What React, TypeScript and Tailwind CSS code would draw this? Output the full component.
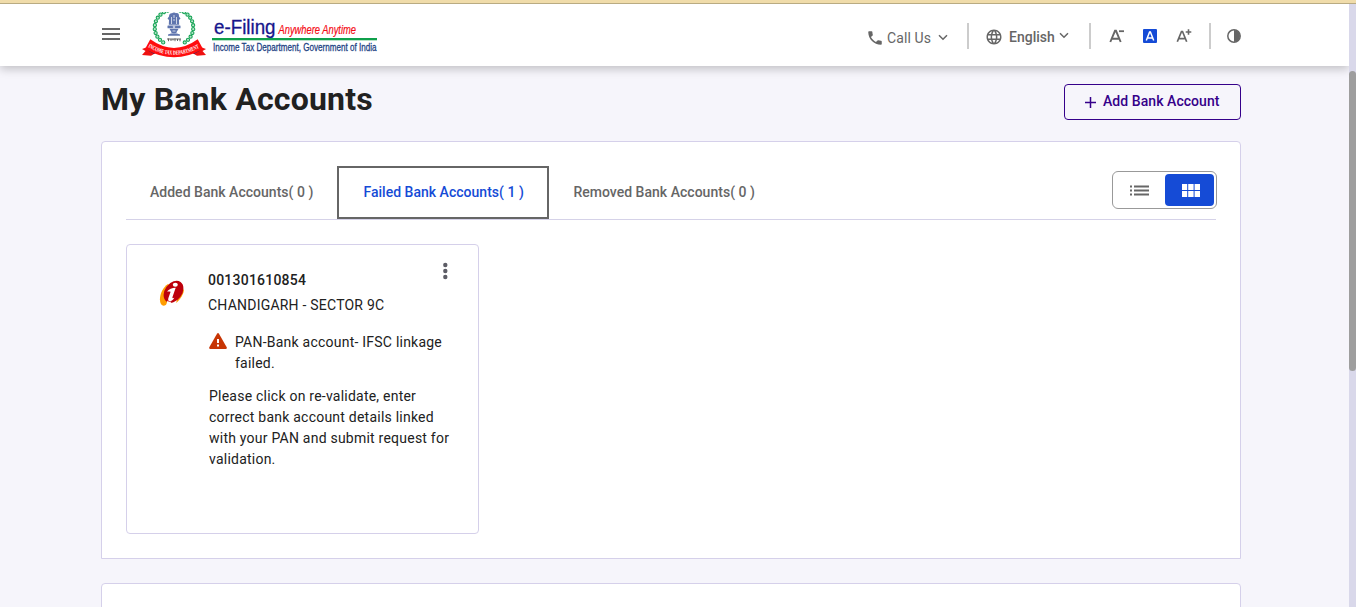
import React from "react";

const GREEN = "#16a455";
const wreath = Array.from({ length: 24 }, (_, i) => {
  const a = ((124 + i * 12.7) * Math.PI) / 180;
  return { x: 33 + 19.3 * Math.cos(a), y: 15.5 + 18 * Math.sin(a) };
});

function Emblem() {
  return (
    <svg width="66" height="46" viewBox="0 0 66 46" className="shrink-0" role="img">
      {wreath.map((p, i) => (
        <circle key={i} cx={p.x} cy={p.y} r="1.6" fill="#b9e3ca" stroke={GREEN} strokeWidth="1.1" />
      ))}
      <g fill="#5f75ae">
        <path d="M28 4.500c0-3 2-3.700 3-3.200 1-1.200 3-1.200 4 0 1.500-.6 3.200.2 3 3.200l1.500 2-1.500 1.500.2 4.800H27.800l.2-4.800L26.500 6.500z" />
        <rect x="26.500" y="13.500" width="13" height="2.800" rx=".5" />
        <path d="M28.500 16.800h9c-.6 2-2.200 2.700-2 4.200h-5c.2-1.500-1.400-2.200-2-4.200z" />
        <path d="M27 22.500q6-2.500 12 0v1.200H27z" />
      </g>
      <g stroke="#fff" strokeWidth=".7" fill="none">
        <path d="M30.500 5v7M35.500 5v7M33 3v3M32 8h2M31.500 19h3" />
        <circle cx="33" cy="14.900" r=".8" />
      </g>
      <path d="M26 27h14M27.500 26.500v2.700M30 27v2M32 27v1.500M34 26.500v2.700M36.500 27v2M39 27v2.300" stroke="#555" strokeWidth=".9" fill="none" />
      <path d="M8 34.500 1 37l3.500 2L1 43l9 .7 5-3zM58 34.500l7 2.500-3.500 2 3.500 4-9 .7-5-3z" fill="#ee1111" />
      <path d="m7 38.500 6 3.500 2-2-5-3zM59 38.500l-6 3.500-2-2 5-3z" fill="#172d75" />
      <path d="M9.300 27.300Q33 44.500 56.700 27.300L62 37Q33 53.500 4 37Z" fill="#ff0d0d" />
      <path id="ribbon" d="M7 35Q33 50.500 60 35" fill="none" />
      <text fill="#fff" fontSize="6" fontWeight="700" fontFamily="Liberation Serif, serif">
        <textPath href="#ribbon" textLength="54" lengthAdjust="spacingAndGlyphs">INCOME TAX DEPARTMENT</textPath>
      </text>
    </svg>
  );
}

function Wordmark() {
  return (
    <svg width="166" height="40" viewBox="0 0 166 40" className="shrink-0 overflow-visible" fontFamily="Liberation Sans, Arial, sans-serif">
      <text x="2" y="17.500" fontSize="20" fill="#16168c" stroke="#16168c" strokeWidth=".3" textLength="61.500" lengthAdjust="spacingAndGlyphs">e-Filing</text>
      <text x="66.500" y="18" fontSize="12.500" fontStyle="italic" fill="#f50a14" stroke="#f50a14" strokeWidth=".2" textLength="77.500" lengthAdjust="spacingAndGlyphs">Anywhere Anytime</text>
      <rect x="0" y="22" width="165" height="2.300" fill="#0fa04b" />
      <text x="1" y="34.500" fontSize="11.500" fill="#1c4283" stroke="#1c4283" strokeWidth=".3" textLength="163.500" lengthAdjust="spacingAndGlyphs">Income Tax Department, Government of India</text>
    </svg>
  );
}

function Chevron({ className = "" }: { className?: string }) {
  return (
    <svg width="10" height="7" viewBox="0 0 10 7" fill="none" stroke="#666" strokeWidth="1.500" className={className}>
      <path d="m1 1.200 4 4 4-4" />
    </svg>
  );
}

function Header() {
  return (
    <header className="relative z-10 flex h-[62px] shrink-0 items-start bg-white pl-[102px] shadow-[0_3px_9px_rgba(0,0,0,0.22)]">
      <button className="mt-6 flex w-[18px] flex-col gap-[3px]" aria-label="Menu">
        <span className="h-0.5 w-full bg-[#666]" />
        <span className="h-0.5 w-full bg-[#666]" />
        <span className="h-0.5 w-full bg-[#666]" />
      </button>
      <a className="ml-[21px] mt-2 flex w-[237px] items-start">
        <Emblem />
        <span className="ml-[5px] mt-[4px] flex"><Wordmark /></span>
      </a>
      <div className="ml-[488px] mt-[19px] flex h-[26px] items-center text-[#666]">
        <div className="flex w-[101px] items-center">
          <svg width="18" height="18" viewBox="0 0 24 24" fill="#666" className="mt-[3px]">
            <path d="M6.620 10.790c1.440 2.830 3.760 5.140 6.590 6.590l2.200-2.200c.27-.27.67-.36 1.020-.24 1.120.37 2.330.57 3.570.57.55 0 1 .45 1 1V20c0 .55-.45 1-1 1-9.390 0-17-7.610-17-17 0-.55.45-1 1-1h3.500c.55 0 1 .45 1 1 0 1.250.2 2.450.57 3.570.11.35.03.74-.25 1.020l-2.200 2.200z" />
          </svg>
          <span className="ml-[3px] mt-[3px] text-[14px] leading-5 tracking-[0.1px]">Call Us</span>
          <Chevron className="ml-auto mr-[19px] mt-[3px]" />
        </div>
        <span className="h-[26px] w-0.5 bg-[#ccc]" />
        <div className="flex w-[120px] items-center">
          <svg width="18" height="18" viewBox="0 0 24 24" fill="#666" className="ml-[16px] mt-px">
            <path d="M11.990 2C6.470 2 2 6.480 2 12s4.470 10 9.990 10C17.520 22 22 17.520 22 12S17.520 2 11.990 2zm6.930 6h-2.950a15.650 15.650 0 0 0-1.380-3.560A8.030 8.030 0 0 1 18.920 8zM12 4.040c.83 1.200 1.480 2.530 1.910 3.960h-3.820c.43-1.430 1.080-2.760 1.910-3.960zM4.260 14C4.100 13.360 4 12.690 4 12s.1-1.360.26-2h3.380c-.08.66-.14 1.320-.14 2s.06 1.340.14 2H4.260zm.82 2h2.950c.32 1.250.78 2.450 1.380 3.560A7.990 7.990 0 0 1 5.080 16zm2.950-8H5.080a7.990 7.990 0 0 1 4.330-3.560A15.650 15.650 0 0 0 8.030 8zM12 19.960c-.83-1.200-1.480-2.530-1.910-3.960h3.820c-.43 1.430-1.080 2.760-1.910 3.960zM14.340 14H9.660c-.09-.66-.16-1.320-.16-2s.07-1.350.16-2h4.680c.09.65.16 1.320.16 2s-.07 1.340-.16 2zm.25 5.560c.6-1.110 1.060-2.310 1.380-3.560h2.950a8.030 8.030 0 0 1-4.330 3.560zM16.360 14c.08-.66.14-1.320.14-2s-.06-1.340-.14-2h3.380c.16.64.26 1.310.26 2s-.1 1.360-.26 2h-3.380z" />
          </svg>
          <span className="ml-[6px] mt-px text-[14px] leading-5 font-medium">English</span>
          <Chevron className="mb-[2px] ml-1" />
        </div>
        <span className="h-[26px] w-0.5 bg-[#ccc]" />
        <svg width="17" height="16" viewBox="0 0 17 16" fill="none" stroke="#666" className="ml-[18px]" role="img">
          <path d="M1.300 14 6 2.800h1L11.700 14M3.200 10.800h6.600" strokeWidth="1.900" />
          <path d="M10 3.200h5" strokeWidth="1.800" />
        </svg>
        <span className="ml-[17px] flex h-[14px] w-[14px] items-center justify-center rounded-[1px] bg-[#154bd6]">
          <svg width="10" height="12" viewBox="0 0 10 12" fill="none" stroke="#fff" strokeWidth="1.500">
            <path d="M1.300 10.500 4.600 2h.8l3.300 8.500M2.700 8h4.600" />
          </svg>
        </span>
        <svg width="17" height="16" viewBox="0 0 17 16" fill="none" stroke="#666" className="ml-[19px]">
          <path d="M1.300 13.700 5.500 3.500h1l4.200 10.200M3 10.700h6" strokeWidth="1.700" />
          <path d="M9.700 4h5.600M12.500 1.200v5.600" strokeWidth="1.600" />
        </svg>
        <span className="ml-4 h-[26px] w-0.5 bg-[#ccc]" />
        <svg width="14" height="14" viewBox="0 0 14 14" className="ml-4">
          <circle cx="7" cy="7" r="6.200" fill="#fff" stroke="#666" strokeWidth="1.500" />
          <path d="M7 1a6 6 0 0 1 0 12z" fill="#666" />
        </svg>
      </div>
    </header>
  );
}

function Tabs() {
  return (
    <div className="flex h-[54px] items-start border-b border-[#d5d2e8] text-[14px] font-medium leading-[53px] tracking-[0.02px] text-[#666]">
      <button className="h-[53px] w-[211px] pl-6 text-left">Added Bank Accounts( 0 )</button>
      <button className="h-[53px] w-[212px] border-2 border-[#666] pl-[24.4px] text-left leading-[49px] text-[#154bd6]">Failed Bank Accounts( 1 )</button>
      <button className="h-[53px] pl-[24.4px] text-left">Removed Bank Accounts( 0 )</button>
      <div className="ml-auto -mr-px mt-[5px] flex h-[38px] w-[105px] rounded-[6px] border border-[#999] p-0.5">
        <button className="flex w-[50px] items-center justify-center pr-px" aria-label="List view">
          <svg width="19" height="11" viewBox="0 0 19 11" fill="#666">
            <path d="M0 .5h2v2H0zM4 .5h15v2H4zM0 4.500h2v2H0zM4 4.500h15v2H4zM0 8.500h2v2H0zM4 8.500h15v2H4z" />
          </svg>
        </button>
        <button className="ml-auto flex w-[49px] items-center justify-center rounded-[4px] bg-[#154bd6] pl-[3px]" aria-label="Grid view">
          <svg width="18" height="13" viewBox="0 0 18 13" fill="#fff">
            <path d="M0 0h5.200v6H0zM6.200 0h5.400v6H6.200zM12.600 0H18v6h-5.400zM0 7h5.200v6H0zM6.200 7h5.400v6H6.200zM12.600 7H18v6h-5.400z" />
          </svg>
        </button>
      </div>
    </div>
  );
}

function AccountCard() {
  return (
    <article className="mt-6 flex h-[290px] w-[353px] rounded-[4px] border border-[#d5d0ea] text-[14px] text-[#212121]">
      <svg width="26" height="27" viewBox="0 0 26 27" className="ml-8 mt-[35px] shrink-0">
        <path d="M9 4C3 8-.5 17 1.500 23c1.500 4 5 3 7 .5L17 10z" fill="#ff9d00" />
        <path d="M17 23c4-3 8-9 8-14l-5 5z" fill="#ff9d00" />
        <ellipse cx="14.500" cy="11.700" rx="8.600" ry="12" transform="rotate(36 14.500 11.700)" fill="#bd000b" />
        <ellipse cx="16.300" cy="4.700" rx="2.500" ry="2" fill="#fff" />
        <path d="M8 11.600c2-2.700 5-3.900 8.700-3.900l-3.200 9.300c-.4 1.200.2 1.500 1.800.8-1 2-3 3.500-4.400 3.500-1.700 0-2.100-1.300-1.500-3.200l2.200-6.300c-1.300-.5-2.400-.4-3.600-.2z" fill="#fff" />
        <path d="M8.500 20.500c.8 1.400 2.400 1.500 3.800 1l-1.800 3.500-3.500.5z" fill="#fff" />
      </svg>
      <div className="ml-[23px] flex grow flex-col">
        <div className="flex h-11 items-end">
          <h2 className="text-[14px] font-medium leading-[18px] tracking-[0.22px]">001301610854</h2>
          <svg width="6" height="18" viewBox="0 0 6 18" fill="#5d5d66" className="mb-[9px] ml-auto mr-[30px]">
            <circle cx="3.300" cy="3" r="2.200" /><circle cx="3.300" cy="9" r="2.200" /><circle cx="3.300" cy="15" r="2.200" />
          </svg>
        </div>
        <p className="mt-[6px] leading-[21px] tracking-[0.22px]">CHANDIGARH - SECTOR 9C</p>
        <div className="mt-4 flex leading-[21px]">
          <svg width="18" height="16" viewBox="0 0 18 16" className="ml-px mt-px shrink-0">
            <path d="M8 .7q1-1.300 2 0l7.700 13.500q.5 1.500-1 1.800H1.300q-1.500-.3-1-1.800z" fill="#c73505" />
            <path d="M8 6h2v4H8zM8 11.500h2v2H8z" fill="#fff" />
          </svg>
          <p className="ml-2 w-[225px] tracking-[0.23px]">PAN-Bank account- IFSC linkage<br />failed.</p>
        </div>
        <p className="ml-px mt-3 leading-[21px] tracking-[0.23px]">
          Please click on re-validate, enter<br />correct bank account details linked<br />with your PAN and submit request for<br />validation.
        </p>
      </div>
    </article>
  );
}

export default function App() {
  return (
    <div className="flex h-[607px] w-[1356px] flex-col overflow-hidden bg-[#f6f5fb] font-[Roboto,sans-serif]">
      <div className="h-1 shrink-0 border-b border-[#b9ab82] bg-[#f0dcaa]" />
      <div className="flex h-[603px]">
        <div className="flex w-[1349px] flex-col overflow-hidden">
          <Header />
          <main className="ml-[101px] w-[1140px]">
            <div className="flex h-[75px] items-start justify-between">
              <h1 className="mt-[13px] text-[32px] font-bold leading-10 tracking-[0.2px] text-[#212121]">My Bank Accounts</h1>
              <button className="mt-[18px] flex h-9 w-[177px] items-center rounded-[4px] border border-[#35008a] pl-5 text-[14px] font-medium text-[#35008a]">
                <svg width="11" height="11" viewBox="0 0 11 11" fill="none" stroke="#35008a" strokeWidth="1.500">
                  <path d="M5.500 0v11M0 5.500h11" />
                </svg>
                <span className="ml-[7px] -mt-[2px] tracking-[0.06px]">Add Bank Account</span>
              </button>
            </div>
            <section className="h-[418px] rounded-t-[4px] border border-[#d5d0ea] bg-white px-6 pt-6">
              <Tabs />
              <AccountCard />
            </section>
            <section className="mt-6 h-20 rounded-t-[4px] border border-[#d5d0ea] bg-white" />
          </main>
        </div>
        <div className="w-[7px] bg-[#d9d8ea] pt-[67px]">
          <div className="h-[300px] rounded-[4px] bg-[#9e9e9e]" />
        </div>
      </div>
    </div>
  );
}
